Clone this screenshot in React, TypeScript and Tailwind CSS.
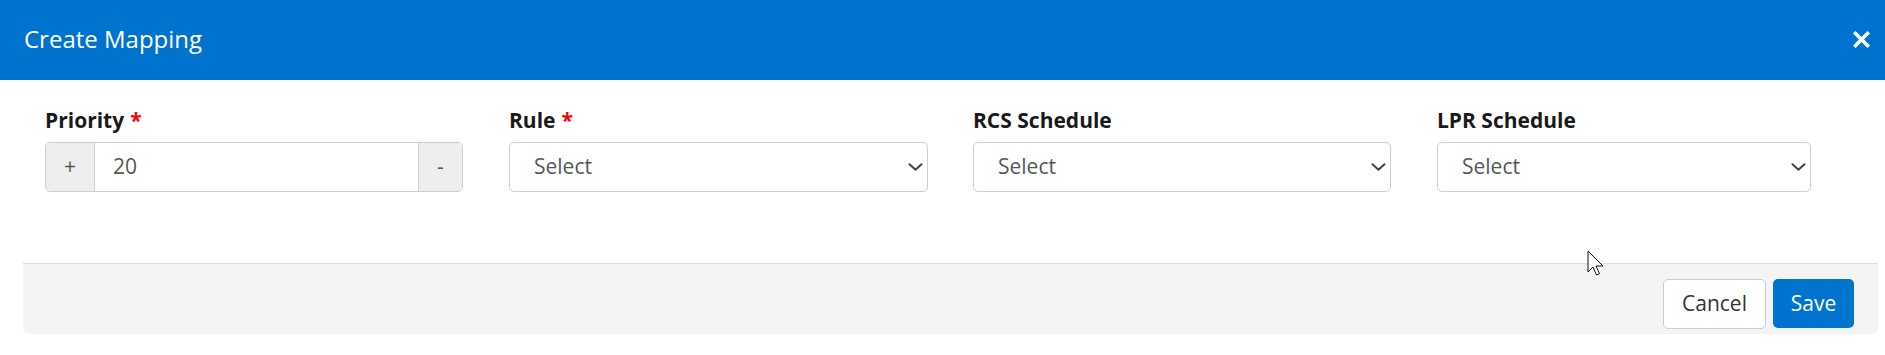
import React from "react";

function Chevron() {
  return (
    <svg width="15" height="8" viewBox="0 0 15 8" fill="none">
      <path d="M1.5 1.2 L7.5 6.8 L13.5 1.2" stroke="#444" strokeWidth="2" strokeLinecap="round" strokeLinejoin="round" />
    </svg>
  );
}

function SelectBox({ w }: { w: string }) {
  return (
    <div className={`${w} h-[50px] rounded-[5px] border border-[#cfcfcf] bg-white flex items-center justify-between pl-[24px] pr-[4px] text-[21px] text-[#555]`}>
      <span>Select</span>
      <Chevron />
    </div>
  );
}

function Label({ text, required }: { text: string; required?: boolean }) {
  return (
    <div className="h-[30px] leading-[30px] text-[21px] font-bold text-[#1a1a1a] mb-[7px]">
      {text}
      {required && <span className="text-[#ff0000] ml-[6px]">*</span>}
    </div>
  );
}

export default function App() {
  return (
    <div className="relative w-[1885px] h-[355px] bg-white overflow-hidden font-['Open_Sans',sans-serif]">
      <div className="h-[80px] bg-[#0073cf] flex items-center justify-between pl-[24px] pr-[15px]">
        <div className="text-[24px] text-white leading-none pb-[2px]">Create Mapping</div>
        <svg width="17" height="17" viewBox="0 0 17 17" className="mb-[1px]">
          <path d="M2.5 2.5 L14.5 14.5 M14.5 2.5 L2.5 14.5" stroke="white" strokeWidth="3.6" strokeLinecap="square" />
        </svg>
      </div>

      <div className="pt-[25px] pb-[71px] pl-[22px] flex">
        <div className="w-[464px] px-[23px]">
          <Label text="Priority" required />
          <div className="h-[50px] flex rounded-[5px] border border-[#cfcfcf] overflow-hidden text-[21px]">
            <div className="w-[49px] bg-[#eeeeee] border-r border-[#cfcfcf] flex items-center justify-center text-[#555]">+</div>
            <div className="flex-1 bg-white flex items-center pl-[18px] text-[#555]">20</div>
            <div className="w-[44px] bg-[#eeeeee] border-l border-[#cfcfcf] flex items-center justify-center text-[#555]">-</div>
          </div>
        </div>
        <div className="w-[464px] px-[23px]">
          <Label text="Rule" required />
          <SelectBox w="w-[419px]" />
        </div>
        <div className="w-[464px] px-[23px]">
          <Label text="RCS Schedule" />
          <SelectBox w="w-[418px]" />
        </div>
        <div className="w-[464px] px-[23px]">
          <Label text="LPR Schedule" />
          <SelectBox w="w-[374px]" />
        </div>
      </div>

      <div className="ml-[23px] mr-[7px] border-t border-[#dddddd] bg-[#f4f4f4] rounded-b-[6px] pt-[15px] pb-[5px] pr-[24px] flex justify-end gap-[7px]">
        <button className="w-[103px] h-[50px] rounded-[5px] border border-[#cccccc] bg-white text-[21px] text-[#333]">Cancel</button>
        <button className="w-[81px] h-[49px] rounded-[5px] bg-[#0073cf] text-[21px] text-white">Save</button>
      </div>

      <svg className="absolute left-[1587px] top-[250px]" width="18" height="28" viewBox="0 0 18 28">
        <path d="M1 1 L1 22 L6 17 L9.5 25 L12.5 23.7 L9 16 L16 16 Z" fill="white" stroke="#111" strokeWidth="1" strokeLinejoin="miter" />
      </svg>
    </div>
  );
}
